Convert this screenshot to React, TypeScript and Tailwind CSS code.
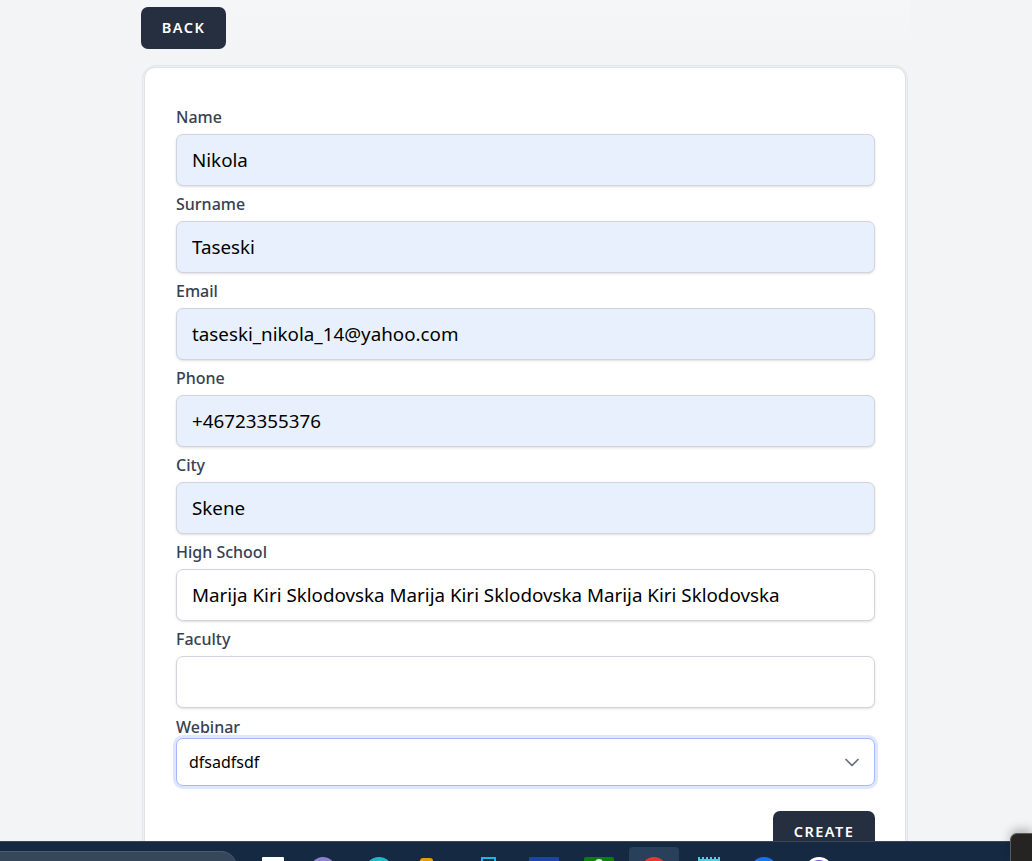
const fields = [
  { label: 'Name', value: 'Nikola', filled: true },
  { label: 'Surname', value: 'Taseski', filled: true },
  { label: 'Email', value: 'taseski_nikola_14@yahoo.com', filled: true },
  { label: 'Phone', value: '+46723355376', filled: true },
  { label: 'City', value: 'Skene', filled: true },
  { label: 'High School', value: 'Marija Kiri Sklodovska Marija Kiri Sklodovska Marija Kiri Sklodovska', filled: false },
  { label: 'Faculty', value: '', filled: false },
];

function Taskbar() {
  return (
    <div className="h-[20px] shrink-0 bg-[#152a42] border-t border-[#3a4653] flex items-start overflow-hidden">
      <div className="w-[237px] h-[20px] mt-[9px] bg-[#36475c] border-t border-[#4c5b6e] rounded-tr-[16px]" />
      <svg width="795" height="19" viewBox="0 0 795 19" className="shrink-0">
        <rect x="25" y="15" width="22" height="6" rx="1" fill="#ffffff" />
        <circle cx="86" cy="28" r="13" fill="#8f7fd0" />
        <circle cx="142" cy="29" r="14" fill="#22b8c8" />
        <rect x="183" y="16" width="13" height="6" rx="3" fill="#e3a008" />
        <rect x="245" y="16" width="13" height="6" fill="none" stroke="#1db4f0" strokeWidth="2" />
        <rect x="292" y="15" width="30" height="6" fill="#1e43a8" />
        <rect x="347" y="15" width="30" height="6" rx="2" fill="#107c10" />
        <circle cx="362" cy="21" r="4" fill="#e5f2e5" />
        <rect x="392" y="5" width="50" height="18" rx="4" fill="#28405a" />
        <circle cx="417" cy="28" r="13" fill="#e53935" />
        <rect x="461" y="17" width="22" height="6" fill="#4dd0e1" />
        <path d="M462 17v-2M466 17v-2M470 17v-2M474 17v-2M478 17v-2M482 17v-2" stroke="#4dd0e1" strokeWidth="2" />
        <circle cx="527" cy="29" r="14" fill="#1a73e8" />
        <circle cx="582" cy="29" r="14" fill="#ffffff" />
        <circle cx="582" cy="29" r="11" fill="#7c4dd8" />
      </svg>
    </div>
  );
}

export default function App() {
  return (
    <div className="relative h-[861px] bg-[#f3f4f6] flex flex-col overflow-hidden font-['Noto_Sans','Open_Sans',sans-serif]">
      <div className="flex-1 min-h-0 overflow-hidden">
        <div className="w-[769px] ml-[141px] pt-[7px] bg-gradient-to-b from-[#f5f6f8] to-[#f3f4f6] to-[60px]">
          <button type="button" className="block w-[85px] h-[42px] rounded-[7px] bg-[#252f3f] text-white text-[14.5px] font-semibold tracking-widest">
            BACK
          </button>
          <div className="mt-[16px] ml-px w-[766px] rounded-[14px] border border-[#e3e5e8] bg-[#eef0f2] p-px">
            <div className="rounded-[11px] border border-[#dfe1e5] bg-white pl-[31px] pr-[30px] pt-[37px] pb-[24px]">
              {fields.map((f) => (
                <div key={f.label} className="mb-[6px]">
                  <label className="block h-[29px] text-base leading-[25px] font-medium text-[#374151]">{f.label}</label>
                  <input
                    readOnly
                    value={f.value}
                    className={`block w-full h-[52px] px-[15px] rounded-[7px] border border-[#d1d5db] text-[18.8px] text-black shadow-sm outline-none ${f.filled ? 'bg-[#e8f0fe]' : 'bg-white'}`}
                  />
                </div>
              ))}
              <label className="block h-[24px] text-base leading-[26px] font-medium text-[#374151]">Webinar</label>
              <div className="relative h-[48px] rounded-[7px] border border-[#a4b8fb] ring-[3px] ring-[#dfe6ff] bg-white flex items-center justify-between pl-[12px] pr-[15px]">
                <span className="text-base text-black">dfsadfsdf</span>
                <svg width="14" height="9" viewBox="0 0 14 9" fill="none">
                  <path d="M1 1.5l6 6 6-6" stroke="#6b7280" strokeWidth="1.75" strokeLinecap="round" strokeLinejoin="round" />
                </svg>
              </div>
              <div className="flex justify-end mt-[25px]">
                <button type="button" className="w-[102px] h-[42px] rounded-[7px] bg-[#252f3f] text-white text-[14.5px] font-semibold tracking-widest">
                  CREATE
                </button>
              </div>
            </div>
          </div>
        </div>
      </div>
      <Taskbar />
      <div className="absolute right-0 top-[833px] w-[22px] h-[28px] bg-[#252423] rounded-tl-[7px] border-l border-t border-[#5a5a5a] shadow-[0_-4px_10px_rgba(0,0,0,0.25)]" />
    </div>
  );
}
